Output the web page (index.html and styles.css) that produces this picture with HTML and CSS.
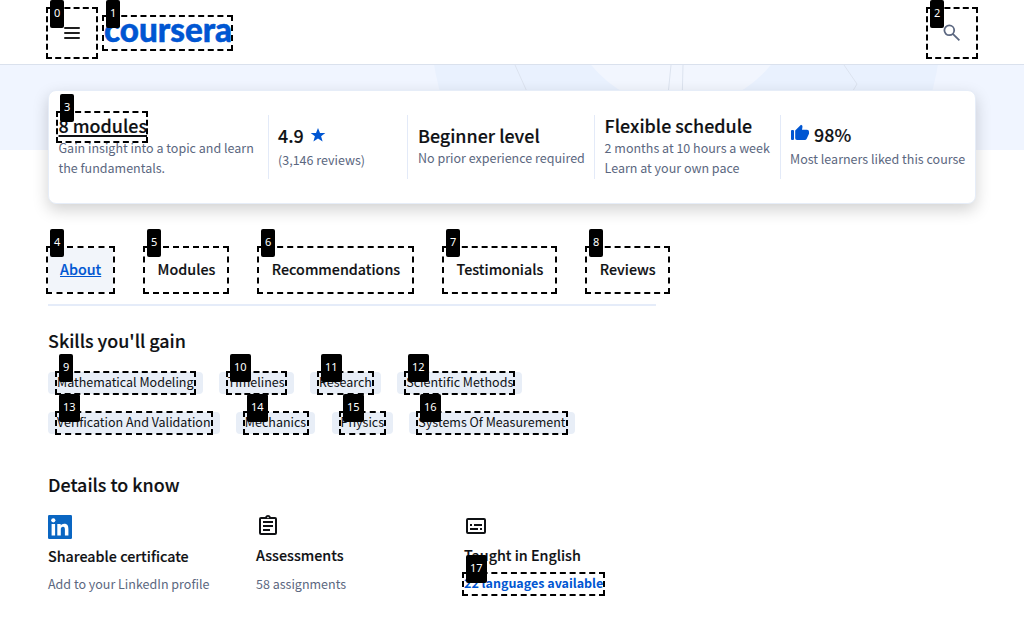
FILE: index.html
```html
<!DOCTYPE html>
<html lang="en">
<head>
<meta charset="utf-8">
<title>Coursera</title>
<link rel="stylesheet" href="styles.css">
</head>
<body>
<header class="header">
  <svg class="menu" viewBox="0 0 18 14"><path d="M2 2h14M2 7h14M2 12h14"/></svg>
  <svg class="logo" viewBox="0 0 132 32"><text x="0" y="26" textLength="128" lengthAdjust="spacingAndGlyphs">coursera</text></svg>
  <svg class="search" viewBox="0 0 18 18"><circle cx="6.3" cy="6.3" r="4.9"/><path d="M9.8 9.8l6.6 6.6"/></svg>
</header>
<section class="hero">
  <svg class="hero-art" viewBox="0 0 1024 85">
    <circle class="ring" cx="686" cy="-40" r="255"/>
    <circle class="core" cx="681" cy="-72" r="115"/>
    <path d="M515 0l18 40M671 0l-4 40M683 0l-1 40M844 0l13 19l-12 20"/>
  </svg>
</section>
<main class="page">
  <section class="card">
    <div class="fact first"><h3 class="under">8 modules</h3><p>Gain insight into a topic and learn<br>the fundamentals.</p></div>
    <div class="fact rating"><h3>4.9 <svg class="star" viewBox="0 0 16 16"><path d="M8 .9l2 5h5.300l-4.200 3.400 1.500 5.300L8 11.500l-4.600 3.100 1.500-5.300L.7 5.900H6z"/></svg></h3><p>(3,146 reviews)</p></div>
    <div class="fact level"><h3>Beginner level</h3><p>No prior experience required</p></div>
    <div class="fact schedule"><h3>Flexible schedule</h3><p>2 months at 10 hours a week<br>Learn at your own pace</p></div>
    <div class="fact liked"><h3><svg class="thumb" viewBox="0 0 20 18"><rect x="1" y="6" width="3" height="10" rx="1"/><path d="M5.200 6.500L11 .8q1.700.3 1.500 2L12 5.700h5q2 0 2 2v2l-2.300 5q-.6 1.300-2 1.300H7q-1.800 0-1.800-1.800z"/></svg>98%</h3><p>Most learners liked this course</p></div>
  </section>
  <nav class="tabs">
    <a class="tab active">About</a><a class="tab">Modules</a><a class="tab">Recommendations</a><a class="tab">Testimonials</a><a class="tab">Reviews</a>
  </nav>
  <h2 class="skills-title">Skills you'll gain</h2>
  <div class="chips"><span>Mathematical Modeling</span><span>Timelines</span><span>Research</span><span>Scientific Methods</span></div>
  <div class="chips"><span>Verification And Validation</span><span>Mechanics</span><span>Physics</span><span>Systems Of Measurement</span></div>
  <h2 class="details-title">Details to know</h2>
  <section class="details">
    <div class="detail cert">
      <svg class="linkedin" viewBox="0 0 24 24"><rect width="24" height="24" rx="1.200"/><circle cx="5.300" cy="5.300" r="2.100"/><path d="M3.600 9h3.500v11.400H3.600zM9.300 9h3.400v1.600c.7-1.200 1.900-1.900 3.500-1.900 3.500 0 4.200 2.200 4.200 5.300v6.400h-3.500v-5.600c0-1.400-.1-3-1.900-3s-2.200 1.400-2.200 2.900v5.700H9.300z"/></svg>
      <h4>Shareable certificate</h4><p>Add to your LinkedIn profile</p>
    </div>
    <div class="detail">
      <svg class="icon" viewBox="0 0 24 24"><path d="M7 15h7v2H7zM7 11h10v2H7zM7 7h10v2H7z"/><path fill-rule="evenodd" d="M19 3h-4.200C14.400 1.800 13.300 1 12 1s-2.400.8-2.800 2H5a2 2 0 0 0-2 2v14a2 2 0 0 0 2 2h14a2 2 0 0 0 2-2V5a2 2 0 0 0-2-2zm-7-.3a.8.8 0 1 1 0 1.600.8.8 0 0 1 0-1.600zM19 19H5V5h14z"/></svg>
      <h4>Assessments</h4><p>58 assignments</p>
    </div>
    <div class="detail">
      <svg class="icon" viewBox="0 0 24 24"><path fill-rule="evenodd" d="M4 4h16a2 2 0 0 1 2 2v12a2 2 0 0 1-2 2H4a2 2 0 0 1-2-2V6a2 2 0 0 1 2-2zm0 2v12h16V6z"/><path d="M6 10h2v2H6zM10 10h8v2h-8zM6 14h8v2H6zM16 14h2v2h-2z"/></svg>
      <h4>Taught in English</h4><p class="link">22 languages available</p>
    </div>
  </section>
</main>
<div class="marks">
  <div class="mark m0"><b>0</b></div><div class="mark m1"><b>1</b></div><div class="mark m2"><b>2</b></div>
  <div class="mark m3"><b>3</b></div><div class="mark m4"><b>4</b></div><div class="mark m5"><b>5</b></div>
  <div class="mark m6"><b>6</b></div><div class="mark m7"><b>7</b></div><div class="mark m8"><b>8</b></div>
  <div class="mark m9"><b>9</b></div><div class="mark m10"><b>10</b></div><div class="mark m11"><b>11</b></div>
  <div class="mark m12"><b>12</b></div><div class="mark m13"><b>13</b></div><div class="mark m14"><b>14</b></div>
  <div class="mark m15"><b>15</b></div><div class="mark m16"><b>16</b></div><div class="mark m17"><b>17</b></div>
</div>
</body>
</html>
```
FILE: styles.css
```css
* { box-sizing: border-box; }
body { margin: 0; height: 629px; overflow: hidden; background: #fff; color: #0f1114; font-family: "Noto Sans CJK SC", "Noto Sans", sans-serif; position: relative; }
h2, h3, h4, p { margin: 0; }
h2, h3, h4 { font-weight: 500; white-space: nowrap; }
h2, h3, h4, .tab { -webkit-text-stroke: .15px currentColor; }
p { white-space: nowrap; }
svg { display: block; flex: none; }

.header { height: 65px; border-bottom: 1px solid #dae1ed; display: flex; align-items: center; padding: 0 63px; }
.menu { width: 18px; height: 14px; margin-top: 2px; fill: none; stroke: #1f1f1f; stroke-width: 2; stroke-linecap: round; }
.logo { width: 132px; height: 32px; margin-left: 23px; fill: #0056d2; overflow: visible; }
.logo text { font: 900 34px Lato, sans-serif; stroke: #0056d2; stroke-width: .5px; }
.search { width: 18px; height: 18px; margin-top: 2px; margin-left: auto; fill: none; stroke: #5b6780; stroke-width: 1.8; }

.hero { height: 85px; background: #f0f5ff; overflow: hidden; }
.hero-art { width: 1024px; height: 85px; fill: none; stroke: #dce3ef; stroke-width: 1; }
.hero-art circle { stroke: none; }
.ring { fill: #e9f1fe; }
.core { fill: #f2f6fe; }

.page { padding: 0 48px; margin-top: -60px; position: relative; }
.card { height: 114px; background: #fff; border: 1px solid #e6edf8; border-radius: 8px; box-shadow: 0 6px 16px rgba(0,0,0,.18); display: grid; grid-template-columns: 219px 139px 187px 186px 1fr; align-content: center; }
.fact { height: 64px; border-left: 1px solid #e3eaf8; padding-left: 9px; padding-bottom: 2px; display: flex; flex-direction: column; justify-content: center; }
.fact.first { border-color: transparent; padding-left: 8.5px; }
.fact.rating { padding-bottom: 2px; }
.fact.level { padding-left: 10px; }
.fact.schedule { padding-left: 9.6px; }
.fact h3 { font-size: 17.9px; line-height: 24px; display: flex; align-items: center; margin-top: -1px; margin-bottom: 1px; }
.fact.rating h3 { margin: 0; }
.under { text-decoration: underline; text-decoration-thickness: 2px; text-underline-offset: 2px; }
.fact p { font-size: 12.5px; line-height: 20px; color: #5b6780; }
.rating p { padding-top: 3px; }
.liked p { padding-top: 2px; }
.star { width: 16px; height: 16px; margin-left: 6px; fill: #0056d2; }
.thumb { width: 20px; height: 18px; margin: -2px 4px 0 0; fill: #0056d2; }

.tabs { width: 608px; height: 58px; margin-top: 44px; border-bottom: 2px solid #e5ecf9; display: flex; gap: 32.4px; }
.tab { flex: none; height: 44px; padding: 0 12px; font-size: 14.3px; font-weight: 500; line-height: 42px; white-space: nowrap; }
.tab.active { background: #f2f5fa; color: #0056d2; text-decoration: underline; }

h2 { font-size: 17.9px; line-height: 24px; }
.skills-title { margin-top: 22px; margin-bottom: 20px; }
.chips { display: flex; gap: 16.3px; margin-bottom: 18px; }
.chips span { height: 22px; border-radius: 4px; background: #e8eef7; padding: 0 9px; font-size: 12.5px; line-height: 20px; white-space: nowrap; }
.details-title { margin-top: 38px; }
.details { display: grid; grid-template-columns: repeat(3, 208px); margin-top: 18px; }
.icon { width: 24px; height: 24px; fill: #0f1114; }
.linkedin { width: 24px; height: 24px; margin-top: 1px; fill: #fff; }
.linkedin rect { fill: #0a66c2; }
.detail h4 { font-size: 14.3px; line-height: 20px; margin-top: 7px; }
.detail p { font-size: 12.5px; line-height: 20px; margin-top: 9px; color: #5b6780; }
.cert p { margin-top: 8px; }
.detail .link { color: #0056d2; font-weight: 700; margin-top: 8px; }

/* numbered outlines floating over the interactive elements */
.mark { position: absolute; border: 2px dashed #000; }
.mark b { position: absolute; left: 2px; top: -19px; height: 28px; padding: 0 4px; background: #000; color: #fff; border-radius: 2px; font: 400 11px/26px "Noto Sans", sans-serif; }
.m0 { left: 46px; top: 7px; width: 52px; height: 52px; }
.m1 { left: 102px; top: 15px; width: 131px; height: 36px; }
.m2 { left: 926px; top: 7px; width: 52px; height: 52px; }
.m0 b, .m2 b { top: -9px; }
.m1 b { top: -17px; }
.m3 { left: 56px; top: 111px; width: 92px; height: 32px; }
.m4, .m5, .m6, .m7, .m8 { top: 246px; height: 48px; }
.m4 { left: 46px; width: 69px; }
.m5 { left: 143px; width: 86px; }
.m6 { left: 257px; width: 157px; }
.m7 { left: 442px; width: 115px; }
.m8 { left: 585px; width: 85px; }
.m9, .m10, .m11, .m12 { top: 371px; height: 24px; }
.m13, .m14, .m15, .m16 { top: 411px; height: 24px; }
.m9 { left: 55px; width: 141px; }
.m10 { left: 226px; width: 61px; }
.m11 { left: 317px; width: 57px; }
.m12 { left: 404px; width: 111px; }
.m13 { left: 55px; width: 158px; }
.m14 { left: 243px; width: 66px; }
.m15 { left: 339px; width: 47px; }
.m16 { left: 416px; width: 152px; }
.m17 { left: 462px; top: 572px; width: 143px; height: 24px; }
```
